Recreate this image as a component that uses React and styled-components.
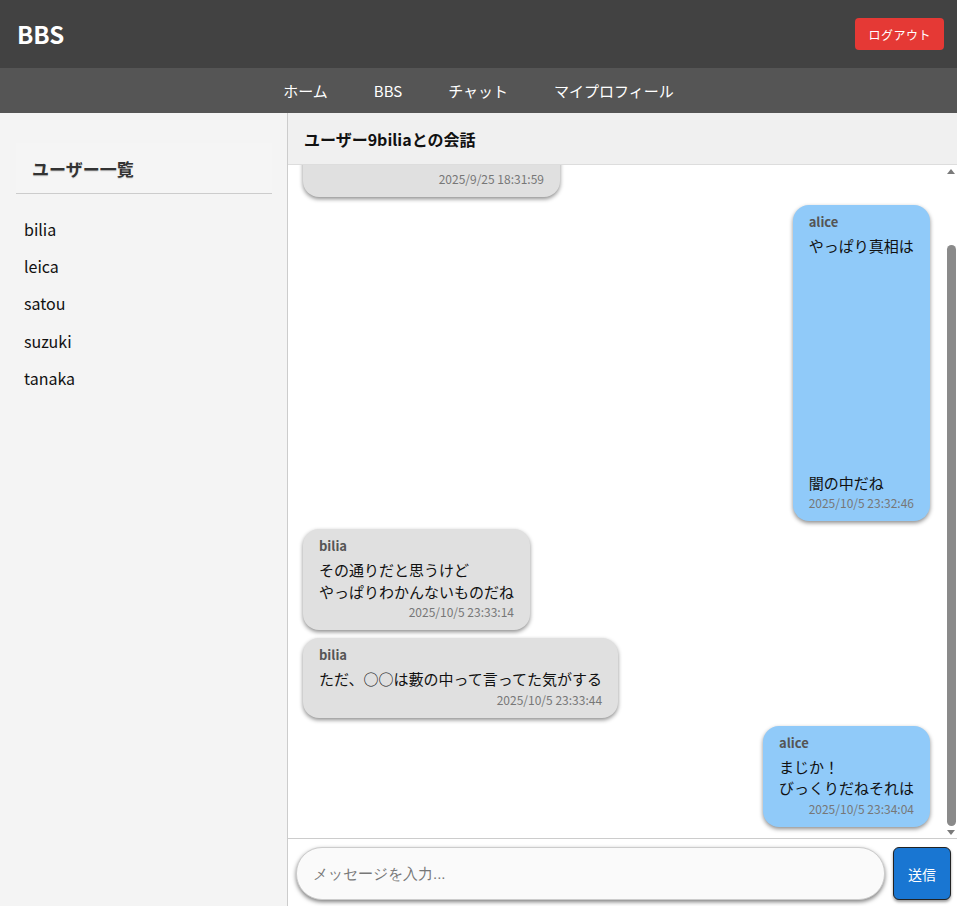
import React, { useLayoutEffect, useRef, useState } from 'react';
import styled, { createGlobalStyle } from 'styled-components';

const GlobalStyle = createGlobalStyle`
  html, body {
    margin: 0;
    padding: 0;
    height: 100%;
  }
  body {
    font-family: "Noto Sans CJK JP", "Noto Sans", sans-serif;
    color: #111;
  }
  #root {
    height: 100%;
  }
`;

const Page = styled.div`
  display: flex;
  flex-direction: column;
  height: 100vh;
`;

const Header = styled.header`
  display: flex;
  align-items: center;
  justify-content: space-between;
  height: 68px;
  padding: 0 13px 0 17px;
  background: #424242;
  color: #fff;
  box-sizing: border-box;
`;

const Logo = styled.h1`
  margin: 0;
  font-size: 24px;
  font-weight: 700;
  line-height: 1;
`;

const LogoutButton = styled.button`
  height: 32px;
  padding: 0 13px;
  border: none;
  border-radius: 4px;
  background: #e53935;
  color: #fff;
  font-family: inherit;
  font-size: 12px;
  letter-spacing: 0.5px;
  cursor: pointer;
`;

const Nav = styled.nav`
  display: flex;
  justify-content: center;
  align-items: center;
  gap: 46px;
  height: 45px;
  background: #555;
`;

const NavLink = styled.a`
  color: #fff;
  font-size: 15px;
  text-decoration: none;
  cursor: pointer;
`;

const Body = styled.div`
  display: flex;
  flex: 1;
  min-height: 0;
`;

const Sidebar = styled.aside`
  width: 288px;
  flex-shrink: 0;
  padding: 30px 15px 0 16px;
  box-sizing: border-box;
  background: #f4f4f4;
  border-right: 1px solid #ccc;
`;

const SidebarTitle = styled.h2`
  display: flex;
  align-items: center;
  height: 50px;
  margin: 0;
  padding: 0 16px;
  font-size: 17px;
  font-weight: 700;
  color: #333;
  background: #f5f5f5;
  border-bottom: 1px solid #ccc;
  text-shadow: 0 1px 1px rgba(0, 0, 0, 0.15);
`;

const UserList = styled.ul`
  list-style: none;
  margin: 16px 0 0;
  padding: 0;
`;

const UserItem = styled.li`
  display: flex;
  align-items: center;
  height: 37.3px;
  padding: 0 8px;
  font-size: 16px;
  color: #111;
  cursor: pointer;
`;

const ChatPane = styled.section`
  display: flex;
  flex-direction: column;
  flex: 1;
  min-width: 0;
`;

const ChatHeader = styled.div`
  display: flex;
  align-items: center;
  height: 52px;
  padding: 0 16px;
  box-sizing: border-box;
  background: #f0f0f0;
  border-bottom: 1px solid #ddd;
  font-size: 16px;
  font-weight: 700;
  flex-shrink: 0;
`;

const MessagesFrame = styled.div`
  display: flex;
  flex: 1;
  min-height: 0;
  background: #fff;
`;

const Messages = styled.div`
  flex: 1;
  min-width: 0;
  overflow-y: auto;
  scrollbar-width: none;
  padding: 10px 15px 11px;
  display: flex;
  flex-direction: column;
  gap: 8px;

  &::-webkit-scrollbar {
    display: none;
  }
`;

const ScrollTrack = styled.div`
  display: flex;
  flex-direction: column;
  align-items: center;
  width: 12px;
  flex-shrink: 0;
  background: #fff;
`;

const Arrow = styled.div`
  display: flex;
  align-items: center;
  justify-content: center;
  height: 12px;
  flex-shrink: 0;

  &::before {
    content: '';
    border-left: 4.5px solid transparent;
    border-right: 4.5px solid transparent;
    ${(p) => (p.$down ? 'border-top: 5px solid #7a7a7a;' : 'border-bottom: 5px solid #7a7a7a;')}
  }
`;

const ThumbArea = styled.div`
  flex: 1;
  display: flex;
  flex-direction: column;
  align-items: center;
  min-height: 0;
`;

const Thumb = styled.div`
  width: 9px;
  border-radius: 5px;
  background: #8a8a8a;
  flex-shrink: 0;
`;

const Bubble = styled.div`
  align-self: ${(p) => (p.$mine ? 'flex-end' : 'flex-start')};
  max-width: 70%;
  padding: 8px 16px 10px;
  border-radius: 16px;
  background: ${(p) => (p.$mine ? '#90caf9' : '#e0e0e0')};
  box-shadow: 0 2px 4px rgba(0, 0, 0, 0.45);
  flex-shrink: 0;
`;

const Sender = styled.div`
  font-size: 13px;
  font-weight: 700;
  line-height: 18px;
  color: #555;
  margin-bottom: 4px;
`;

const Text = styled.div`
  font-size: 15px;
  line-height: 21.5px;
  white-space: pre-wrap;
  color: #111;
`;

const Time = styled.div`
  margin-top: 2px;
  font-size: 12px;
  line-height: 16px;
  color: #777;
  text-align: right;
`;

const Composer = styled.form`
  display: flex;
  align-items: stretch;
  gap: 8px;
  height: 68px;
  padding: 8px 6px 6px 8px;
  box-sizing: border-box;
  border-top: 1px solid #ccc;
  background: #fff;
  flex-shrink: 0;
`;

const MessageInput = styled.input`
  flex: 1;
  min-width: 0;
  padding: 0 16px;
  border: 1px solid #ccc;
  border-radius: 26px;
  background: #fafafa;
  font-size: 15px;
  outline: none;
  box-shadow: 0 2px 4px rgba(0, 0, 0, 0.5);

  &::placeholder {
    color: #777;
  }
`;

const SendButton = styled.button`
  width: 58px;
  border: 1px solid #222;
  border-radius: 6px;
  background: #1976d2;
  color: #fff;
  font-family: inherit;
  font-size: 14px;
  box-shadow: 0 2px 3px rgba(0, 0, 0, 0.4);
  cursor: pointer;
`;

const users = ['bilia', 'leica', 'satou', 'suzuki', 'tanaka'];

const messages = [
  { from: 'bilia', text: 'あの事件、結局どうなったのか？\n\u3000', time: '2025/9/25 18:31:59' },
  { from: 'alice', text: 'やっぱり真相は' + '\n'.repeat(11) + '闇の中だね', time: '2025/10/5 23:32:46' },
  { from: 'bilia', text: 'その通りだと思うけど\nやっぱりわかんないものだね', time: '2025/10/5 23:33:14' },
  { from: 'bilia', text: 'ただ、○○は藪の中って言ってた気がする', time: '2025/10/5 23:33:44' },
  { from: 'alice', text: 'まじか！\nびっくりだねそれは', time: '2025/10/5 23:34:04' }
];

export default function App() {
  const listRef = useRef(null);
  const areaRef = useRef(null);
  const [thumb, setThumb] = useState({ top: 0, height: 0 });

  const updateThumb = () => {
    const el = listRef.current;
    const area = areaRef.current;
    if (!el || !area) return;
    const len = area.clientHeight;
    const ratio = el.clientHeight / el.scrollHeight;
    setThumb({
      top: (el.scrollTop / el.scrollHeight) * len,
      height: Math.max(20, ratio * len)
    });
  };

  useLayoutEffect(() => {
    if (listRef.current) listRef.current.scrollTop = listRef.current.scrollHeight;
    updateThumb();
  }, []);

  return (
    <>
      <GlobalStyle />
      <Page>
        <Header>
          <Logo>BBS</Logo>
          <LogoutButton>ログアウト</LogoutButton>
        </Header>
        <Nav>
          <NavLink>ホーム</NavLink>
          <NavLink>BBS</NavLink>
          <NavLink>チャット</NavLink>
          <NavLink>マイプロフィール</NavLink>
        </Nav>
        <Body>
          <Sidebar>
            <SidebarTitle>ユーザー一覧</SidebarTitle>
            <UserList>
              {users.map((u) => (
                <UserItem key={u}>{u}</UserItem>
              ))}
            </UserList>
          </Sidebar>
          <ChatPane>
            <ChatHeader>ユーザー9biliaとの会話</ChatHeader>
            <MessagesFrame>
              <Messages ref={listRef} onScroll={updateThumb}>
                {messages.map((m, i) => (
                  <Bubble key={i} $mine={m.from === 'alice'}>
                    <Sender>{m.from}</Sender>
                    <Text>{m.text}</Text>
                    <Time>{m.time}</Time>
                  </Bubble>
                ))}
              </Messages>
              <ScrollTrack>
                <Arrow />
                <ThumbArea ref={areaRef}>
                  <Thumb style={{ marginTop: thumb.top, height: thumb.height }} />
                </ThumbArea>
                <Arrow $down />
              </ScrollTrack>
            </MessagesFrame>
            <Composer onSubmit={(e) => e.preventDefault()}>
              <MessageInput placeholder="メッセージを入力..." />
              <SendButton type="submit">送信</SendButton>
            </Composer>
          </ChatPane>
        </Body>
      </Page>
    </>
  );
}
